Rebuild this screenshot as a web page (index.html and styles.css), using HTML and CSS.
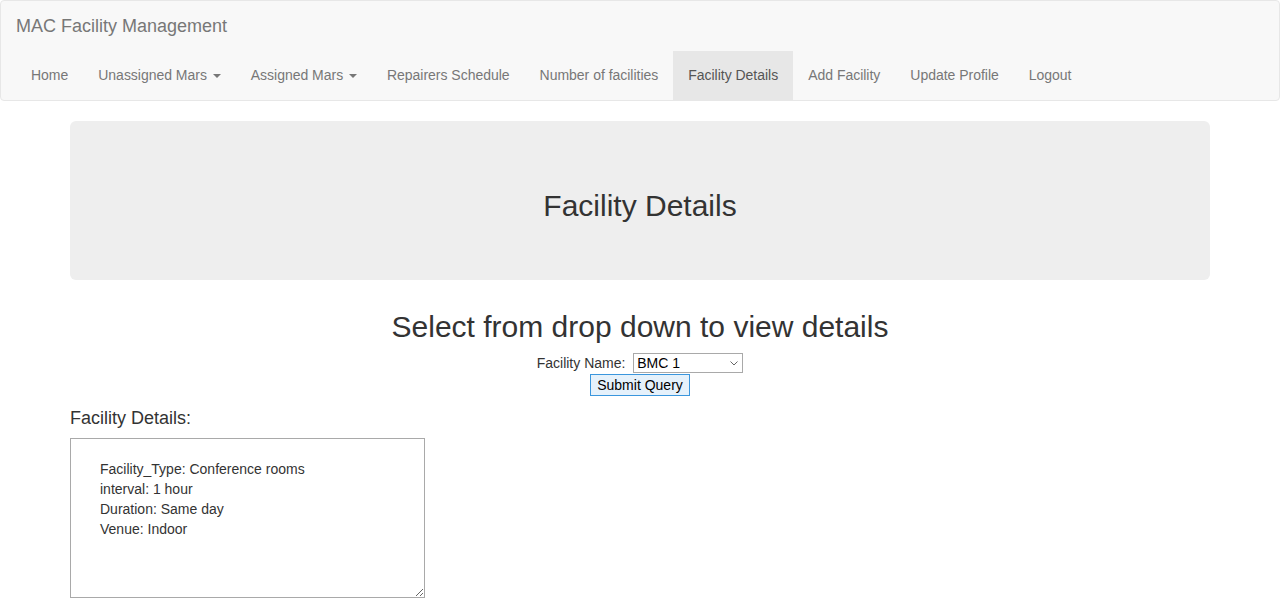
FILE: index.html
```html
<!DOCTYPE html>
<html>
<head>
<meta charset="utf-8">
<title>Facility Details</title>
<link rel="stylesheet" href="styles.css">
</head>
<body>
<nav class="navbar">
  <div class="brand">MAC Facility Management</div>
  <ul class="nav">
    <li><a href="#">Home</a></li>
    <li><a href="#">Unassigned Mars <span class="caret"></span></a></li>
    <li><a href="#">Assigned Mars <span class="caret"></span></a></li>
    <li><a href="#">Repairers Schedule</a></li>
    <li><a href="#">Number of facilities</a></li>
    <li class="active"><a href="#">Facility Details</a></li>
    <li><a href="#">Add Facility</a></li>
    <li><a href="#">Update Profile</a></li>
    <li><a href="#">Logout</a></li>
  </ul>
</nav>
<div class="container">
  <div class="jumbotron">
    <h2>Facility Details</h2>
  </div>
  <h2 class="center">Select from drop down to view details</h2>
  <form class="query">
    <div class="row">
      <label>Facility Name:</label>
      <span class="select-wrap">
        <select><option>BMC 1</option></select>
        <svg class="chev" width="8" height="5" viewBox="0 0 8 5"><path d="M0.5 0.5 L4 4 L7.5 0.5" fill="none" stroke="#666" stroke-width="1"/></svg>
      </span>
    </div>
    <div class="row">
      <button type="button">Submit Query</button>
    </div>
  </form>
  <h4>Facility Details:</h4>
  <textarea class="details">Facility_Type: Conference rooms
interval: 1 hour
Duration: Same day
Venue: Indoor</textarea>
</div>
</body>
</html>
```
FILE: styles.css
```css
html, body {
  margin: 0;
  padding: 0;
}
body {
  font-family: "Liberation Sans", Arial, sans-serif;
  font-size: 14px;
  line-height: 20px;
  color: #333;
  background: #fff;
}
.navbar {
  background: #f8f8f8;
  border: 1px solid #e7e7e7;
  border-radius: 4px;
  margin-bottom: 20px;
}
.brand {
  padding: 15px;
  height: 20px;
  font-size: 18px;
  line-height: 20px;
  color: #777;
}
.nav {
  display: flex;
  list-style: none;
  margin: 0;
  padding: 0 0 0 15px;
}
.nav a {
  display: block;
  padding: 14px 15px 15px;
  line-height: 20px;
  color: #777;
  text-decoration: none;
  letter-spacing: -0.02px;
}
.nav .active a {
  background: #e7e7e7;
  color: #555;
}
.caret {
  display: inline-block;
  width: 0;
  height: 0;
  margin-left: 2px;
  vertical-align: middle;
  border-top: 4px solid;
  border-left: 4px solid transparent;
  border-right: 4px solid transparent;
}
.container {
  width: 1140px;
  margin: 0 auto;
}
.jumbotron {
  background: #eee;
  border-radius: 6px;
  padding: 48px 60px;
  margin-bottom: 30px;
  text-align: center;
}
h2 {
  font-size: 30px;
  font-weight: 500;
  line-height: 1.1;
  margin: 20px 0 10px;
}
.center {
  text-align: center;
  margin-top: 0;
}
.query {
  text-align: center;
}
.query .row {
  line-height: 20px;
}
.query label {
  margin-right: 4px;
}
.select-wrap {
  position: relative;
  display: inline-block;
  vertical-align: top;
}
.query select {
  -webkit-appearance: none;
  appearance: none;
  display: block;
  width: 110px;
  height: 20px;
  font-family: "Liberation Sans", Arial, sans-serif;
  font-size: 14px;
  color: #000;
  border: 1px solid #a9a9a9;
  border-radius: 0;
  background: #fff;
  padding: 0 3px;
  text-align: left;
}
.chev {
  position: absolute;
  right: 5px;
  top: 8px;
  pointer-events: none;
}
.query button {
  height: 22px;
  font-family: "Liberation Sans", Arial, sans-serif;
  font-size: 14px;
  color: #000;
  background: #e5f1fb;
  border: 1px solid #3a96dd;
  border-radius: 0;
  padding: 0 6px;
  margin-top: 1px;
  vertical-align: top;
}
h4 {
  font-size: 18px;
  font-weight: 500;
  line-height: 1.1;
  margin: 13px 0 9px;
}
.details {
  display: block;
  box-sizing: border-box;
  width: 355px;
  height: 160px;
  border: 1px solid #a9a9a9;
  border-radius: 0;
  padding: 20px 2px 2px 29px;
  font-family: "Liberation Sans", Arial, sans-serif;
  font-size: 14px;
  line-height: 20px;
  color: #333;
  background: #fff;
  margin: 0;
}
```
